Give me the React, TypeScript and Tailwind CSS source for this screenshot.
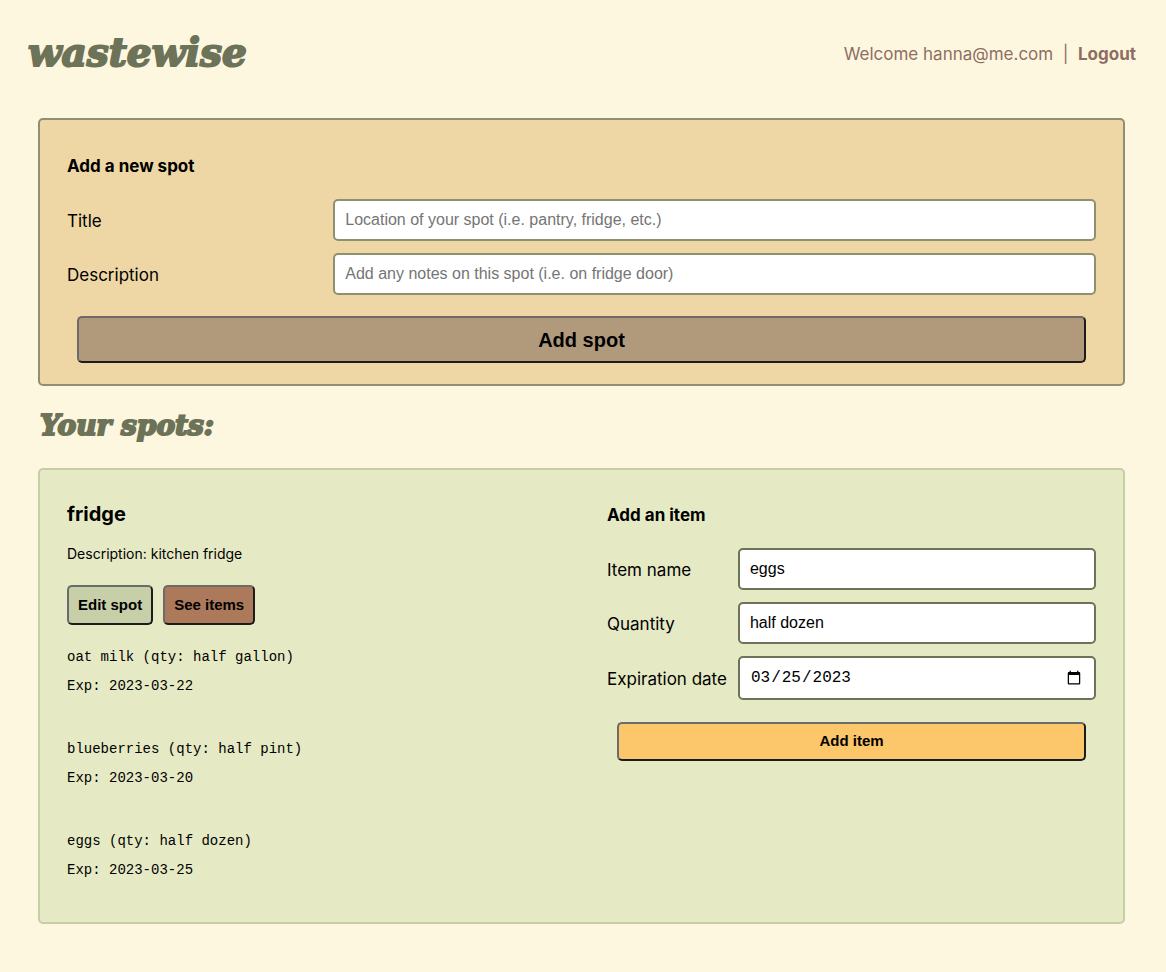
import type { InputHTMLAttributes } from "react";

const items = [
  { name: "oat milk", qty: "half gallon", exp: "2023-03-22" },
  { name: "blueberries", qty: "half pint", exp: "2023-03-20" },
  { name: "eggs", qty: "half dozen", exp: "2023-03-25" },
];

const bevel =
  "rounded-[5px] border-2 border-t-[#6b6b6b] border-l-[#6b6b6b] border-r-[#1c1c1c] border-b-[#1c1c1c] font-['Liberation_Sans',sans-serif] font-bold text-black";

type FieldProps = InputHTMLAttributes<HTMLInputElement> & {
  id: string;
  label: string;
  look: string;
};

function Field({ id, label, look, ...rest }: FieldProps) {
  return (
    <>
      <label htmlFor={id} className="pt-[2px] text-[17px] leading-[24px] whitespace-nowrap">
        {label}
      </label>
      <input
        id={id}
        className={`w-full min-w-0 rounded-[5px] border-2 bg-white px-[10px] ${look}`}
        {...rest}
      />
    </>
  );
}

const sans = "h-[42px] font-['Liberation_Sans',sans-serif] text-[16px]";

export default function App() {
  return (
    <div className="min-h-screen bg-[#fef7df] pb-12 font-[Inter,sans-serif] text-black">
      <header className="flex h-[118px] items-start justify-between pt-[28px] pr-[30px] pl-[28px]">
        <h1 className="font-['DejaVu_Serif',serif] text-[39px] leading-[48px] font-bold text-[#6d7358] italic [-webkit-text-stroke:2px_#6d7358]">
          wastewise
        </h1>
        <p className="pt-[14px] text-[17px] leading-[24px] whitespace-pre text-[#8d6e63]">
          Welcome hanna@me.com{"  |  "}
          <a href="#logout" className="font-bold">
            Logout
          </a>
        </p>
      </header>

      <main className="pr-[41px] pl-[38px]">
        <form
          className="rounded-[5px] border-2 border-[#8f9072] bg-[#eed7a4] px-[27px] pt-[34px] pb-[21px]"
          onSubmit={(e) => e.preventDefault()}
        >
          <h2 className="text-[17px] leading-[24px] font-bold">Add a new spot</h2>
          <div className="mt-[21px] grid grid-cols-[1fr_3fr] items-center gap-x-[12px] gap-y-[12px]">
            <Field
              id="title"
              label="Title"
              placeholder="Location of your spot (i.e. pantry, fridge, etc.)"
              look={`border-[#8f9072] placeholder:text-[#757575] ${sans}`}
            />
            <Field
              id="description"
              label="Description"
              placeholder="Add any notes on this spot (i.e. on fridge door)"
              look={`border-[#8f9072] placeholder:text-[#757575] ${sans}`}
            />
          </div>
          <div className="mt-[21px] flex px-[10px]">
            <button className={`h-[47px] flex-1 bg-[#b19a7c] text-[20px] ${bevel}`}>Add spot</button>
          </div>
        </form>

        <h2 className="mt-[22px] mb-[24px] pl-[2px] font-['DejaVu_Serif',serif] text-[28px] leading-[36px] font-bold text-[#6d7358] italic [-webkit-text-stroke:2px_#6d7358]">
          Your spots:
        </h2>

        <section className="grid grid-cols-2 gap-[51px] rounded-[5px] border-2 border-[#c5cfa5] bg-[#e5eac4] px-[27px] pt-[29px] pb-[37px]">
          <div>
            <h3 className="text-[20px] leading-[30px] font-bold">fridge</h3>
            <p className="mt-[15px] text-[14px] leading-[20px]">Description: kitchen fridge</p>
            <div className="mt-[21px] flex gap-[10px]">
              <button className={`h-[40px] bg-[#c7cfa8] px-[9px] text-[15px] ${bevel}`}>
                Edit spot
              </button>
              <button className={`h-[40px] bg-[#ad795b] px-[9px] text-[15px] ${bevel}`}>
                See items
              </button>
            </div>
            <ul className="mt-[18px] flex flex-col gap-[34px] font-['Liberation_Mono',monospace] text-[14px] leading-[29px]">
              {items.map((item) => (
                <li key={item.name}>
                  <p>
                    {item.name} (qty: {item.qty})
                  </p>
                  <p>Exp: {item.exp}</p>
                </li>
              ))}
            </ul>
          </div>

          <form onSubmit={(e) => e.preventDefault()}>
            <h3 className="pt-[4px] text-[17px] leading-[24px] font-bold">Add an item</h3>
            <div className="mt-[21px] grid grid-cols-[auto_1fr] items-center gap-x-[11px] gap-y-[12px]">
              <Field id="item" label="Item name" defaultValue="eggs" look={`border-[#6d7358] ${sans}`} />
              <Field
                id="quantity"
                label="Quantity"
                defaultValue="half dozen"
                look={`border-[#6d7358] ${sans}`}
              />
              <Field
                id="expiration"
                label="Expiration date"
                type="date"
                defaultValue="2023-03-25"
                look="h-[44px] border-[#6d7358] font-['Liberation_Mono',monospace] text-[16px]"
              />
            </div>
            <div className="mt-[22px] flex px-[10px]">
              <button className={`h-[39px] flex-1 bg-[#fcc66b] text-[15px] ${bevel}`}>Add item</button>
            </div>
          </form>
        </section>
      </main>
    </div>
  );
}
